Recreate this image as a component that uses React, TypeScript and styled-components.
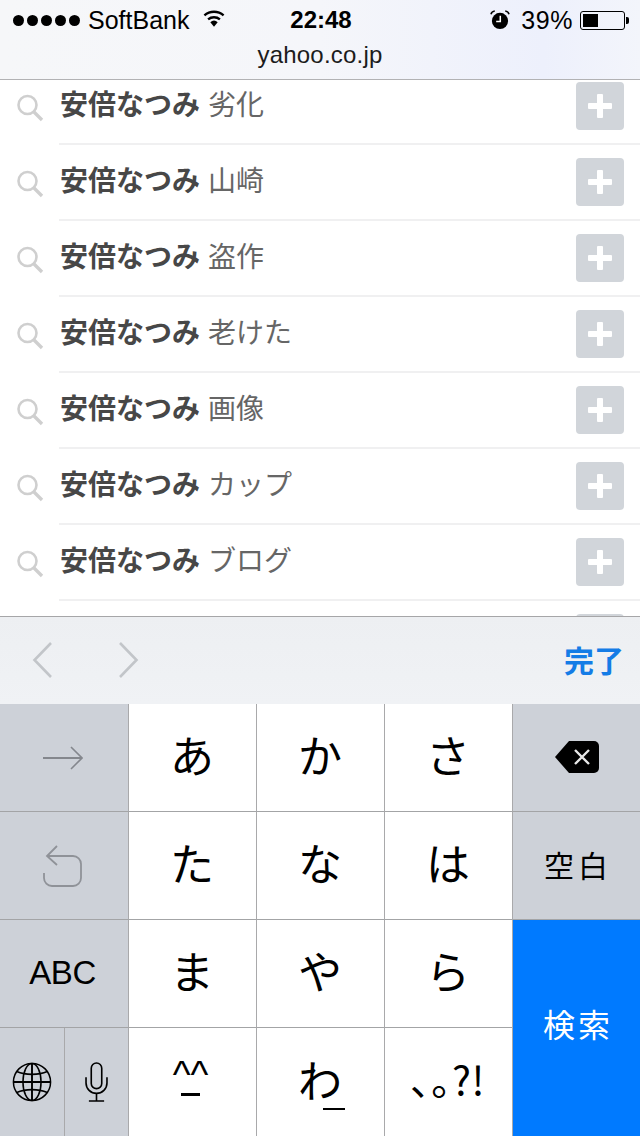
import React from 'react';
import styled, { createGlobalStyle } from 'styled-components';

const GlobalStyle = createGlobalStyle`
  html, body {
    margin: 0;
    padding: 0;
    background: #fff;
  }
  * {
    box-sizing: border-box;
  }
`;

const Phone = styled.div`
  width: 640px;
  height: 1136px;
  display: flex;
  flex-direction: column;
  overflow: hidden;
  font-family: 'Liberation Sans', 'Noto Sans CJK JP', sans-serif;
  color: #000;
`;

const Header = styled.header`
  height: 80px;
  flex: none;
  border-bottom: 1px solid #b2b2b4;
  background: linear-gradient(90deg, #f6f7f9 0%, #f5f6fa 50%, #edf0fc 85%, #f3f5fb 100%);
`;

const StatusBar = styled.div`
  height: 40px;
  padding: 0 15px 0 13px;
  display: grid;
  grid-template-columns: 1fr auto 1fr;
  align-items: center;
  font-size: 24px;
`;

const StatusLeft = styled.div`
  display: flex;
  align-items: center;
`;

const StatusRight = styled.div`
  display: flex;
  align-items: center;
  justify-content: flex-end;
`;

const Dots = styled.div`
  display: flex;
  gap: 3px;
  margin-right: 8px;
`;

const Dot = styled.span`
  width: 11px;
  height: 11px;
  border-radius: 50%;
  background: #000;
`;

const Carrier = styled.span`
  font-size: 25px;
  margin-right: 13px;
`;

const Time = styled.span`
  font-weight: 700;
  position: relative;
  left: 2px;
`;

const Percent = styled.span`
  font-size: 25px;
  margin: 0 7px 0 11px;
  letter-spacing: 0.6px;
`;

const Battery = styled.div`
  width: 45px;
  height: 19px;
  border: 1px solid #000;
  border-radius: 3px;
  padding: 2px;
  position: relative;

  &::after {
    content: '';
    position: absolute;
    right: -5px;
    top: 5px;
    width: 3px;
    height: 7px;
    border-radius: 0 2px 2px 0;
    background: #000;
  }
`;

const BatteryLevel = styled.div`
  height: 100%;
  background: #000;
`;

const Address = styled.div`
  text-align: center;
  font-size: 24px;
  line-height: 30px;
  letter-spacing: 0.2px;
  color: #1c1c1c;
`;

const SuggestArea = styled.div`
  height: 536px;
  flex: none;
  overflow: hidden;
  background: #fff;
`;

const SuggestList = styled.ul`
  list-style: none;
  margin: -12px 0 0;
  padding: 0;
`;

const SuggestRow = styled.li`
  height: 76px;
  display: flex;
  align-items: center;
  padding: 0 16px;
  position: relative;

  &::after {
    content: '';
    position: absolute;
    left: 59px;
    right: 0;
    bottom: -1px;
    height: 2px;
    background: #f0f0f1;
  }
`;

const SearchMark = styled.svg`
  width: 28px;
  height: 28px;
  flex: none;
  margin: 3px 16px 0 0;
`;

const Phrase = styled.div`
  flex: 1;
  display: flex;
  gap: 8px;
  font-family: 'Noto Sans CJK JP', sans-serif;
  font-size: 28px;
  line-height: 40px;
  margin-top: -6px;
`;

const Query = styled.strong`
  font-weight: 700;
  color: #474747;
`;

const Completion = styled.span`
  font-weight: 400;
  color: #666;
`;

const AddButton = styled.div`
  width: 48px;
  height: 48px;
  flex: none;
  border-radius: 4px;
  background: #d1d5da;
  position: relative;

  &::before,
  &::after {
    content: '';
    position: absolute;
    background: #fff;
    border-radius: 1px;
  }

  &::before {
    left: 12px;
    right: 12px;
    top: 21px;
    height: 6px;
  }

  &::after {
    top: 12px;
    bottom: 12px;
    left: 21px;
    width: 6px;
  }
`;

const Toolbar = styled.div`
  height: 88px;
  flex: none;
  display: flex;
  align-items: center;
  padding: 0 16px 2px 32px;
  border-top: 1px solid #a6a6a8;
  background: linear-gradient(180deg, #edeff2 0%, #f0f2f5 100%);
`;

const NavIcon = styled.svg`
  width: 22px;
  height: 38px;
  margin-right: 63px;
`;

const Done = styled.span`
  margin-left: auto;
  margin-top: -2px;
  font-family: 'Noto Sans CJK JP', sans-serif;
  font-weight: 700;
  font-size: 30px;
  color: #147ce6;
`;

const Keyboard = styled.div`
  height: 432px;
  flex: none;
  display: grid;
  grid-template-columns: repeat(5, 128px);
  grid-template-rows: repeat(4, 108px);
  background: #fff;
`;

const Key = styled.div<{ $gray?: boolean }>`
  display: flex;
  align-items: center;
  justify-content: center;
  border-left: 1px solid #a9a9ab;
  border-bottom: 1px solid #a3a4a6;
  background: ${(p) => (p.$gray ? '#cdd1d8' : '#fff')};
  min-width: 0;

  &:nth-child(5n + 1) {
    border-left: 0;
  }

  &:nth-child(n + 16) {
    border-bottom: 0;
  }
`;

const KanaKey = styled(Key)`
  font-family: 'Noto Sans CJK JP', sans-serif;
  font-size: 44px;
  padding: 0 1px 7px 0;
`;

const LabelKey = styled(Key)`
  font-family: 'Noto Sans CJK JP', sans-serif;
  font-size: 30px;
  letter-spacing: 4px;
  padding: 0 0 3px 3px;
`;

const AbcKey = styled(Key)`
  font-size: 33px;
  letter-spacing: -0.4px;
  padding: 0 3px 2px 0;
`;

const IconKey = styled(Key)`
  padding-right: 3px;
`;

const DeleteKey = styled(Key)`
  padding-bottom: 2px;
`;

const SearchKey = styled.div`
  grid-column: 5;
  grid-row: 3 / span 2;
  display: flex;
  align-items: center;
  justify-content: center;
  border-left: 1px solid #a9a9ab;
  background: #007aff;
  color: #fff;
  font-family: 'Noto Sans CJK JP', sans-serif;
  font-size: 32px;
  letter-spacing: 3px;
  padding: 0 0 11px 3px;
`;

const SplitKey = styled.div`
  display: grid;
  grid-template-columns: 64px 64px;
`;

const SmallKey = styled.div`
  display: flex;
  align-items: center;
  justify-content: center;
  background: #cdd1d8;

  & + & {
    border-left: 1px solid #a9a9ab;
  }
`;

const Face = styled.span`
  font-family: 'Liberation Sans', sans-serif;
  font-size: 38px;
  line-height: 36px;
  margin: -8px 3px 0 0;
  position: relative;

  &::after {
    content: '';
    position: absolute;
    left: 8px;
    right: 8px;
    bottom: -3px;
    height: 3px;
    background: #000;
  }
`;

const Wa = styled.span`
  position: relative;
  line-height: 50px;

  &::after {
    content: '';
    position: absolute;
    left: 25px;
    bottom: -6px;
    width: 22px;
    height: 2px;
    background: #000;
  }
`;

const Punct = styled.span`
  font-size: 40px;
  letter-spacing: 0.5px;
  margin-top: -2px;
`;

const rows = ['劣化', '山崎', '盗作', '老けた', '画像', 'カップ', 'ブログ', ''];

const SearchIcon = () => (
  <SearchMark viewBox="0 0 28 28" fill="none" stroke="#cfcfcf">
    <circle cx="11.5" cy="11" r="9" strokeWidth="2.6" />
    <path d="M18 18l8 8" strokeWidth="3.4" />
  </SearchMark>
);

const WifiIcon = () => (
  <svg width="24" height="19" viewBox="0 0 26 20" style={{ marginTop: -3 }}>
    <path d="M13 19l-4-5a6 6 0 0 1 8 0z" fill="#000" />
    <path d="M6.6 11a10 10 0 0 1 12.8 0" fill="none" stroke="#000" strokeWidth="2.6" />
    <path d="M2.6 6.6a16 16 0 0 1 20.8 0" fill="none" stroke="#000" strokeWidth="2.6" />
  </svg>
);

const AlarmIcon = () => (
  <svg width="20" height="20" viewBox="0 0 21 21">
    <circle cx="10.5" cy="11.5" r="8.5" fill="#000" />
    <path d="M10.8 6v6H6.5" fill="none" stroke="#fff" strokeWidth="1.6" />
    <path d="M1 4.5C1.5 2.5 3 1.2 5 1M20 4.5C19.500 2.500 18 1.200 16 1" fill="none" stroke="#000" strokeWidth="1.6" />
  </svg>
);

const BackspaceIcon = () => (
  <svg width="44" height="32" viewBox="0 0 44 32">
    <path d="M14 0h25a5 5 0 0 1 5 5v22a5 5 0 0 1-5 5H14L0 16z" fill="#000" />
    <path d="M20 9l14 14M34 9L20 23" stroke="#e8e8e8" strokeWidth="2.4" fill="none" />
  </svg>
);

const ArrowIcon = () => (
  <svg width="40" height="24" viewBox="0 0 40 24" fill="none" stroke="#84878d" strokeWidth="2">
    <path d="M0 12h38" />
    <path d="M28 1l11 11-11 11" strokeWidth="1.6" />
  </svg>
);

const UndoIcon = () => (
  <svg width="40" height="42" viewBox="0 0 40 42" fill="none" stroke="#8f9298" strokeWidth="1.8">
    <path d="M14 1L4 11l10 9" />
    <path d="M4 11h26a8 8 0 0 1 8 8v14a8 8 0 0 1-8 8H9a8 8 0 0 1-8-8v-5" />
  </svg>
);

const GlobeIcon = () => (
  <svg width="40" height="40" viewBox="0 0 42 42" fill="none" stroke="#000" strokeWidth="1.6">
    <circle cx="21" cy="21" r="19.5" />
    <ellipse cx="21" cy="21" rx="9.5" ry="19.500" />
    <path d="M21 1.500v39M1.500 21h39" strokeWidth="2" />
    <path d="M5 10c9 4 23 4 32 0M5 32c9-4 23-4 32 0" />
  </svg>
);

const MicIcon = () => (
  <svg width="23" height="40" viewBox="0 0 24 42" fill="none" stroke="#000" strokeWidth="1.7">
    <rect x="6.500" y="1" width="11" height="27" rx="5.500" />
    <path d="M1 16v6a11 11 0 0 0 22 0v-6" />
    <path d="M12 33v8M4 41h16" />
  </svg>
);

export default function App() {
  return (
    <Phone>
      <GlobalStyle />
      <Header>
        <StatusBar>
          <StatusLeft>
            <Dots>
              {[0, 1, 2, 3, 4].map((i) => (
                <Dot key={i} />
              ))}
            </Dots>
            <Carrier>SoftBank</Carrier>
            <WifiIcon />
          </StatusLeft>
          <Time>22:48</Time>
          <StatusRight>
            <AlarmIcon />
            <Percent>39%</Percent>
            <Battery>
              <BatteryLevel style={{ width: '39%' }} />
            </Battery>
          </StatusRight>
        </StatusBar>
        <Address>yahoo.co.jp</Address>
      </Header>

      <SuggestArea>
        <SuggestList>
          {rows.map((word, i) => (
            <SuggestRow key={i}>
              <SearchIcon />
              <Phrase>
                <Query>{word && '安倍なつみ'}</Query>
                <Completion>{word}</Completion>
              </Phrase>
              <AddButton />
            </SuggestRow>
          ))}
        </SuggestList>
      </SuggestArea>

      <Toolbar>
        <NavIcon viewBox="0 0 22 38" fill="none" stroke="#c2c5c9" strokeWidth="2.6">
          <path d="M19 2L2.500 19 19 36" />
        </NavIcon>
        <NavIcon viewBox="0 0 22 38" fill="none" stroke="#c2c5c9" strokeWidth="2.6">
          <path d="M3 2l16.500 17L3 36" />
        </NavIcon>
        <Done>完了</Done>
      </Toolbar>

      <Keyboard>
        <IconKey $gray>
          <ArrowIcon />
        </IconKey>
        <KanaKey>あ</KanaKey>
        <KanaKey>か</KanaKey>
        <KanaKey>さ</KanaKey>
        <DeleteKey $gray>
          <BackspaceIcon />
        </DeleteKey>

        <IconKey $gray>
          <UndoIcon />
        </IconKey>
        <KanaKey>た</KanaKey>
        <KanaKey>な</KanaKey>
        <KanaKey>は</KanaKey>
        <LabelKey $gray>空白</LabelKey>

        <AbcKey $gray>ABC</AbcKey>
        <KanaKey>ま</KanaKey>
        <KanaKey>や</KanaKey>
        <KanaKey>ら</KanaKey>
        <SearchKey>検索</SearchKey>

        <SplitKey>
          <SmallKey>
            <GlobeIcon />
          </SmallKey>
          <SmallKey>
            <MicIcon />
          </SmallKey>
        </SplitKey>
        <KanaKey>
          <Face>^^</Face>
        </KanaKey>
        <KanaKey>
          <Wa>わ</Wa>
        </KanaKey>
        <KanaKey>
          <Punct>､｡?!</Punct>
        </KanaKey>
      </Keyboard>
    </Phone>
  );
}
